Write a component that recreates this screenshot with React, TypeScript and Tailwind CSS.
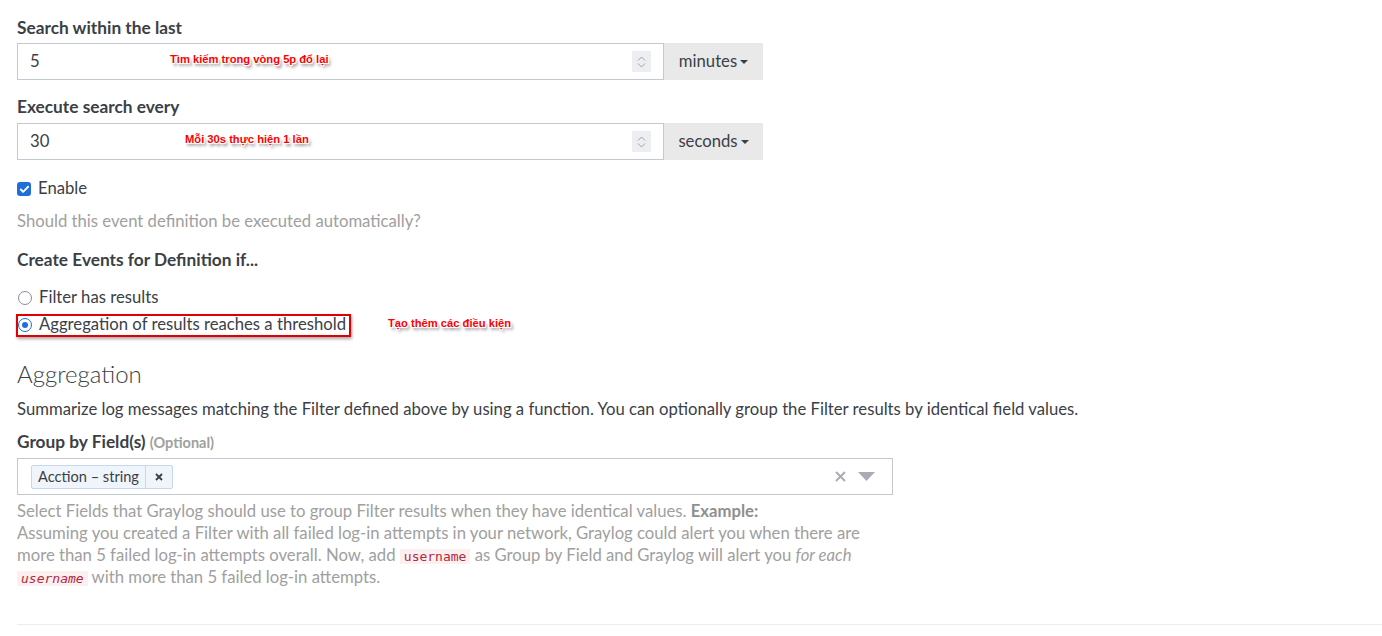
import { Check } from "lucide-react";

const font = { fontFamily: "Lato, 'Noto Sans', sans-serif" };

function Note({ text }: { text: string }) {
    return (
        <span
            className="absolute whitespace-nowrap text-[11.2px] font-bold text-[#ff0000] font-['Liberation_Sans',Arial,sans-serif] [text-shadow:0_0_2px_#fff,0_0_2px_#fff,1px_1px_0_#fff,-1px_-1px_0_#fff,1px_-1px_0_#fff,-1px_1px_0_#fff,2px_3px_3px_rgba(0,0,0,0.5)]"
        >
            {text}
        </span>
    );
}

function NumberInput({ value, unit, note, noteLeft }: { value: string; unit: string; note: string; noteLeft: string }) {
    return (
        <div className="flex w-[746px] h-[37px]">
            <div className="relative flex-1 flex items-center border border-[#c3c8d1] bg-white px-3">
                <span className="text-[16.7px] text-[#3b3f46]">{value}</span>
                <div className={`absolute top-[7px] ${noteLeft}`}>
                    <Note text={note} />
                </div>
                <div className="ml-auto w-[19px] h-[21px] bg-[#eceef1] flex flex-col items-center justify-center gap-[2px]">
                    <svg width="9" height="5" viewBox="0 0 9 5"><path d="M1 4.5 L4.5 1 L8 4.5" fill="none" stroke="#9aa0aa" strokeWidth="1" /></svg>
                    <svg width="9" height="5" viewBox="0 0 9 5"><path d="M1 0.5 L4.5 4 L8 0.5" fill="none" stroke="#9aa0aa" strokeWidth="1" /></svg>
                </div>
            </div>
            <div className="w-[99px] flex items-center justify-center gap-[3px] bg-[#e9e9e9] text-[16.7px] text-[#3b3f46]">
                {unit}
                <svg width="8" height="4" viewBox="0 0 8 4"><path d="M0 0 L8 0 L4 4 Z" fill="#3b3f46" /></svg>
            </div>
        </div>
    );
}

function Radio({ checked, label }: { checked?: boolean; label: string }) {
    return (
        <div className="flex items-center gap-[7px]">
            <span className={`w-[14px] h-[14px] rounded-full border flex items-center justify-center ${checked ? "border-[#1f6fdb]" : "border-[#8a8f98]"}`}>
                {checked && <span className="w-[6px] h-[6px] rounded-full bg-[#1f6fdb]" />}
            </span>
            <span className="text-[16.7px] text-[#3b3f46]">{label}</span>
        </div>
    );
}

function Code({ children, italic }: { children: string; italic?: boolean }) {
    return (
        <code className={`leading-none bg-[#fbefef] text-[#b0293f] text-[13px] px-[4px] font-['DejaVu_Sans_Mono',monospace] ${italic ? "italic" : ""}`}>
            {children}
        </code>
    );
}

export default function App() {
    return (
        <div className="w-[1382px] h-[636px] bg-white overflow-hidden" style={font}>
            <div className="px-[17px] pt-[17px] flex flex-col">
                <label className="text-[17.3px] font-bold text-[#3b3f46] leading-[22px]">Search within the last</label>
                <div className="mt-[4px]">
                    <NumberInput value="5" unit="minutes" note="Tìm kiếm trong vòng 5p đổ lại" noteLeft="left-[152px]" />
                </div>

                <label className="mt-[16px] text-[17.3px] font-bold text-[#3b3f46] leading-[22px]">Execute search every</label>
                <div className="mt-[5px]">
                    <NumberInput value="30" unit="seconds" note="Mỗi 30s thực hiện 1 lần" noteLeft="left-[167px]" />
                </div>

                <div className="mt-[18px] flex items-center gap-[7px] h-[22px]">
                    <span className="w-[14px] h-[14px] rounded-[3px] bg-[#1f6fdb] flex items-center justify-center">
                        <Check size={11} strokeWidth={4} color="#fff" />
                    </span>
                    <span className="text-[16.7px] text-[#3b3f46]">Enable</span>
                </div>
                <p className="mt-[10px] text-[16.7px] text-[#a0a0a0] leading-[22px]">Should this event definition be executed automatically?</p>

                <label className="mt-[17px] text-[17.3px] font-bold text-[#3b3f46] leading-[22px]">Create Events for Definition if...</label>

                <div className="mt-[16px] flex flex-col gap-[5px]">
                    <div className="h-[22px] flex items-center pl-[1px]">
                        <Radio label="Filter has results" />
                    </div>
                    <div className="relative h-[22px] flex items-center">
                        <div className="-ml-[1px] border-2 border-[#e00000] shadow-[1px_2px_3px_rgba(0,0,0,0.35)] pr-[3px] h-[23px] flex items-center">
                            <Radio checked label="Aggregation of results reaches a threshold" />
                        </div>
                        <div className="absolute left-[371px] top-[1px]">
                            <Note text="Tạo thêm các điều kiện" />
                        </div>
                    </div>
                </div>

                <h2 className="mt-[22px] text-[24px] font-light text-[#3b3f46] leading-[32px]">Aggregation</h2>
                <p className="mt-[8px] text-[16.7px] text-[#3b3f46] leading-[22px]">
                    Summarize log messages matching the Filter defined above by using a function. You can optionally group the Filter results by identical field values.
                </p>

                <label className="mt-[11px] text-[17.3px] font-bold text-[#3b3f46] leading-[22px]">
                    Group by Field(s) <span className="text-[14.5px] text-[#a0a0a0]">(Optional)</span>
                </label>
                <div className="mt-[4px] w-[876px] h-[37px] border border-[#c3c8d1] flex items-center px-[13px]">
                    <div className="flex h-[24px] border border-[#c6d8ec] bg-[#f0f5fb] rounded-[2px] text-[14.6px] text-[#3b3f46]">
                        <span className="px-[6px] flex items-center border-r border-[#c6d8ec]">Acction – string</span>
                        <span className="w-[26px] flex items-center justify-center">
                            <svg width="8" height="8" viewBox="0 0 8 8"><path d="M1 1 L7 7 M7 1 L1 7" stroke="#3b3f46" strokeWidth="1.8" /></svg>
                        </span>
                    </div>
                    <div className="ml-auto flex items-center gap-[12px] mr-[4px]">
                        <svg width="11" height="11" viewBox="0 0 11 11"><path d="M1 1 L10 10 M10 1 L1 10" stroke="#a9adb3" strokeWidth="2" /></svg>
                        <svg width="17" height="9" viewBox="0 0 17 9"><path d="M0 0 L17 0 L8.5 9 Z" fill="#a9adb3" /></svg>
                    </div>
                </div>

                <div className="mt-[5px] text-[16.7px] text-[#a0a0a0] leading-[22px] whitespace-nowrap">
                    <div>
                        Select Fields that Graylog should use to group Filter results when they have identical values. <b className="text-[#8f8f8f]">Example:</b>
                    </div>
                    <div>Assuming you created a Filter with all failed log-in attempts in your network, Graylog could alert you when there are</div>
                    <div>
                        more than 5 failed log-in attempts overall. Now, add <Code>username</Code> as Group by Field and Graylog will alert you <i>for each</i>
                    </div>
                    <div>
                        <Code italic>username</Code> with more than 5 failed log-in attempts.
                    </div>
                </div>

                <div className="mt-[36px] h-px bg-[#ececec] -mr-[17px]" />
            </div>
        </div>
    );
}
